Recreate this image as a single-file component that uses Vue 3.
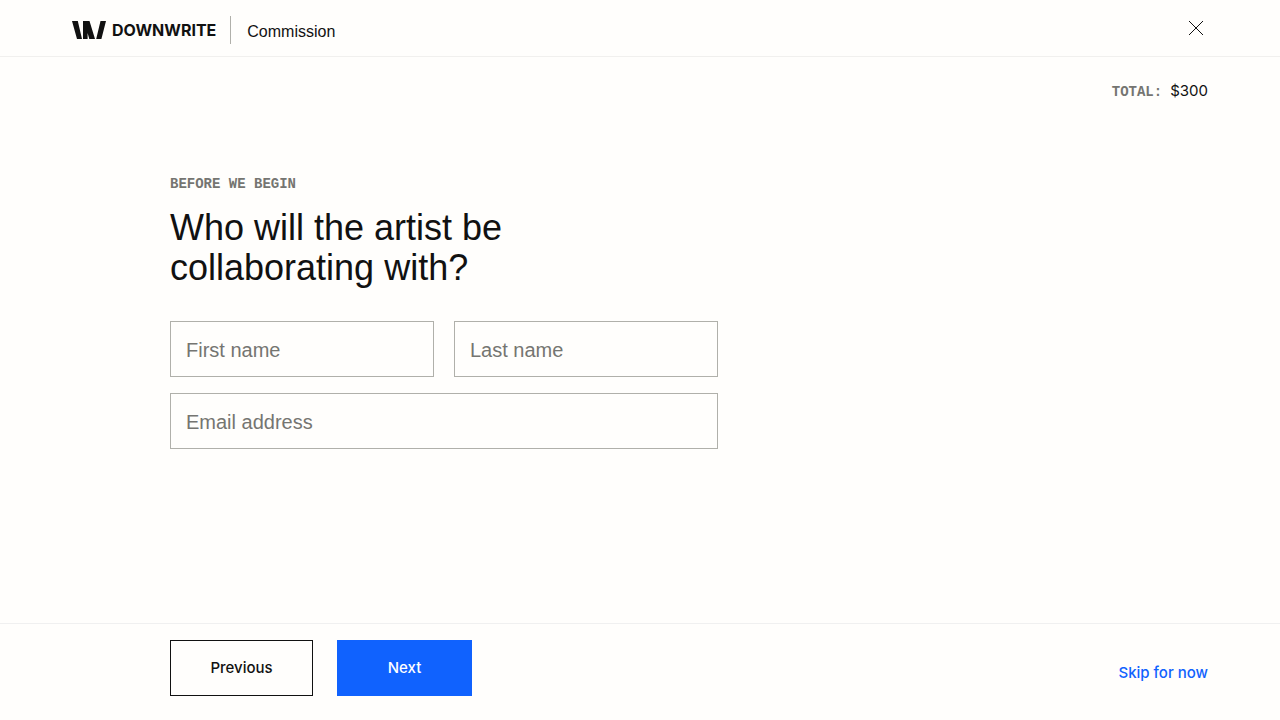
<script setup>
import { ref } from 'vue'

const firstName = ref('')
const lastName = ref('')
const email = ref('')
</script>

<template>
  <div class="page">
    <header class="header">
      <div class="brand">
        <a class="logo" href="#" aria-label="Downwrite home">
          <svg class="mark" width="34" height="18" viewBox="0 0 34 18" aria-hidden="true">
            <path d="M0 0H5.8L10 18H5ZM11 0H17.5L23 18H17.3L15.6 12V18H11ZM28.5 0H34L29.4 18H24.2Z" fill="#111" />
          </svg>
          <span class="wordmark">DOWNWRITE</span>
        </a>
        <span class="section">Commission</span>
      </div>
      <button class="close" type="button" aria-label="Close">
        <svg width="16" height="16" viewBox="0 0 16 16" aria-hidden="true">
          <path d="M1 1L15 15M15 1L1 15" fill="none" stroke="#111" stroke-width="1" />
        </svg>
      </button>
    </header>

    <main class="main">
      <p class="total"><span class="mono">TOTAL:</span><span class="amount">$300</span></p>
      <form id="details" class="form" @submit.prevent>
        <p class="mono">BEFORE WE BEGIN</p>
        <h1 class="title">Who will the artist be collaborating with?</h1>
        <div class="fields">
          <input v-model="firstName" class="field" type="text" placeholder="First name" aria-label="First name" />
          <input v-model="lastName" class="field" type="text" placeholder="Last name" aria-label="Last name" />
          <input v-model="email" class="field wide" type="email" placeholder="Email address" aria-label="Email address" />
        </div>
      </form>
    </main>

    <footer class="footer">
      <div class="actions">
        <button class="button previous" type="button">Previous</button>
        <button class="button next" type="submit" form="details">Next</button>
      </div>
      <a class="skip" href="#">Skip for now</a>
    </footer>
  </div>
</template>

<style>
body {
  background: #fffefc;
}
</style>

<style scoped>
.page {
  display: flex;
  flex-direction: column;
  min-height: 100vh;
  background: #fffefc;
  color: #111;
  font-family: "Liberation Sans", Arial, sans-serif;
  font-size: 16px;
  line-height: 24px;
}

.page * {
  box-sizing: border-box;
}

.header {
  display: flex;
  align-items: center;
  justify-content: space-between;
  padding: 0 72px;
  height: 57px;
  border-bottom: 1px solid #f1f0ee;
}

.brand {
  display: flex;
  align-items: center;
  gap: 14px;
  padding-top: 4px;
}

.logo {
  display: flex;
  align-items: center;
  gap: 6px;
  color: inherit;
  text-decoration: none;
}

.mark {
  display: block;
}

.wordmark {
  font-family: Inter, "Liberation Sans", sans-serif;
  font-size: 16px;
  font-weight: 700;
}

.section {
  padding: 4px 0 0 16px;
  border-left: 1px solid #b0b0aa;
}

.close {
  display: flex;
  align-items: center;
  justify-content: center;
  width: 24px;
  height: 24px;
  padding: 0;
  border: 0;
  background: none;
  cursor: pointer;
}

.main {
  flex: 1;
  padding: 22px 72px 24px;
}

.total {
  display: flex;
  justify-content: flex-end;
  align-items: baseline;
  gap: 8px;
  margin: 0;
}

.amount {
  font-family: Inter, "Liberation Sans", sans-serif;
  font-size: 15px;
}

.mono {
  margin: 0;
  color: #757571;
  font-family: "Liberation Mono", "Courier New", monospace;
  font-size: 14px;
  font-weight: 700;
  line-height: 16px;
}

.form {
  max-width: 646px;
  margin: 73px 0 0;
  padding-left: 98px;
}

.title {
  max-width: 400px;
  margin: 16px 0 0;
  font-size: 36px;
  font-weight: 400;
  line-height: 40px;
}

.fields {
  display: grid;
  grid-template-columns: 1fr 1fr;
  gap: 16px 20px;
  margin-top: 33px;
}

.field {
  width: 100%;
  min-width: 0;
  height: 56px;
  padding: 2px 15px 0;
  border: 1px solid #b0b0aa;
  border-radius: 0;
  background: transparent;
  color: #111;
  font-family: inherit;
  font-size: 20px;
}

.field::placeholder {
  color: #757571;
  opacity: 1;
}

.wide {
  grid-column: 1 / -1;
}

.footer {
  display: flex;
  align-items: center;
  justify-content: space-between;
  padding: 16px 72px 24px 170px;
  border-top: 1px solid #f0f0f0;
}

.actions {
  display: flex;
  gap: 24px;
}

.button {
  height: 56px;
  padding: 0 0 2px;
  border: 1px solid #111;
  font-family: Inter, "Liberation Sans", sans-serif;
  font-size: 15px;
  font-weight: 500;
  cursor: pointer;
}

.previous {
  width: 143px;
  background: transparent;
  color: #111;
}

.next {
  width: 135px;
  border-color: #1062fe;
  background: #1062fe;
  color: #fff;
}

.skip {
  margin-top: 10px;
  color: #1062fe;
  font-family: Inter, "Liberation Sans", sans-serif;
  font-size: 15px;
  font-weight: 500;
  text-decoration: none;
}
</style>
